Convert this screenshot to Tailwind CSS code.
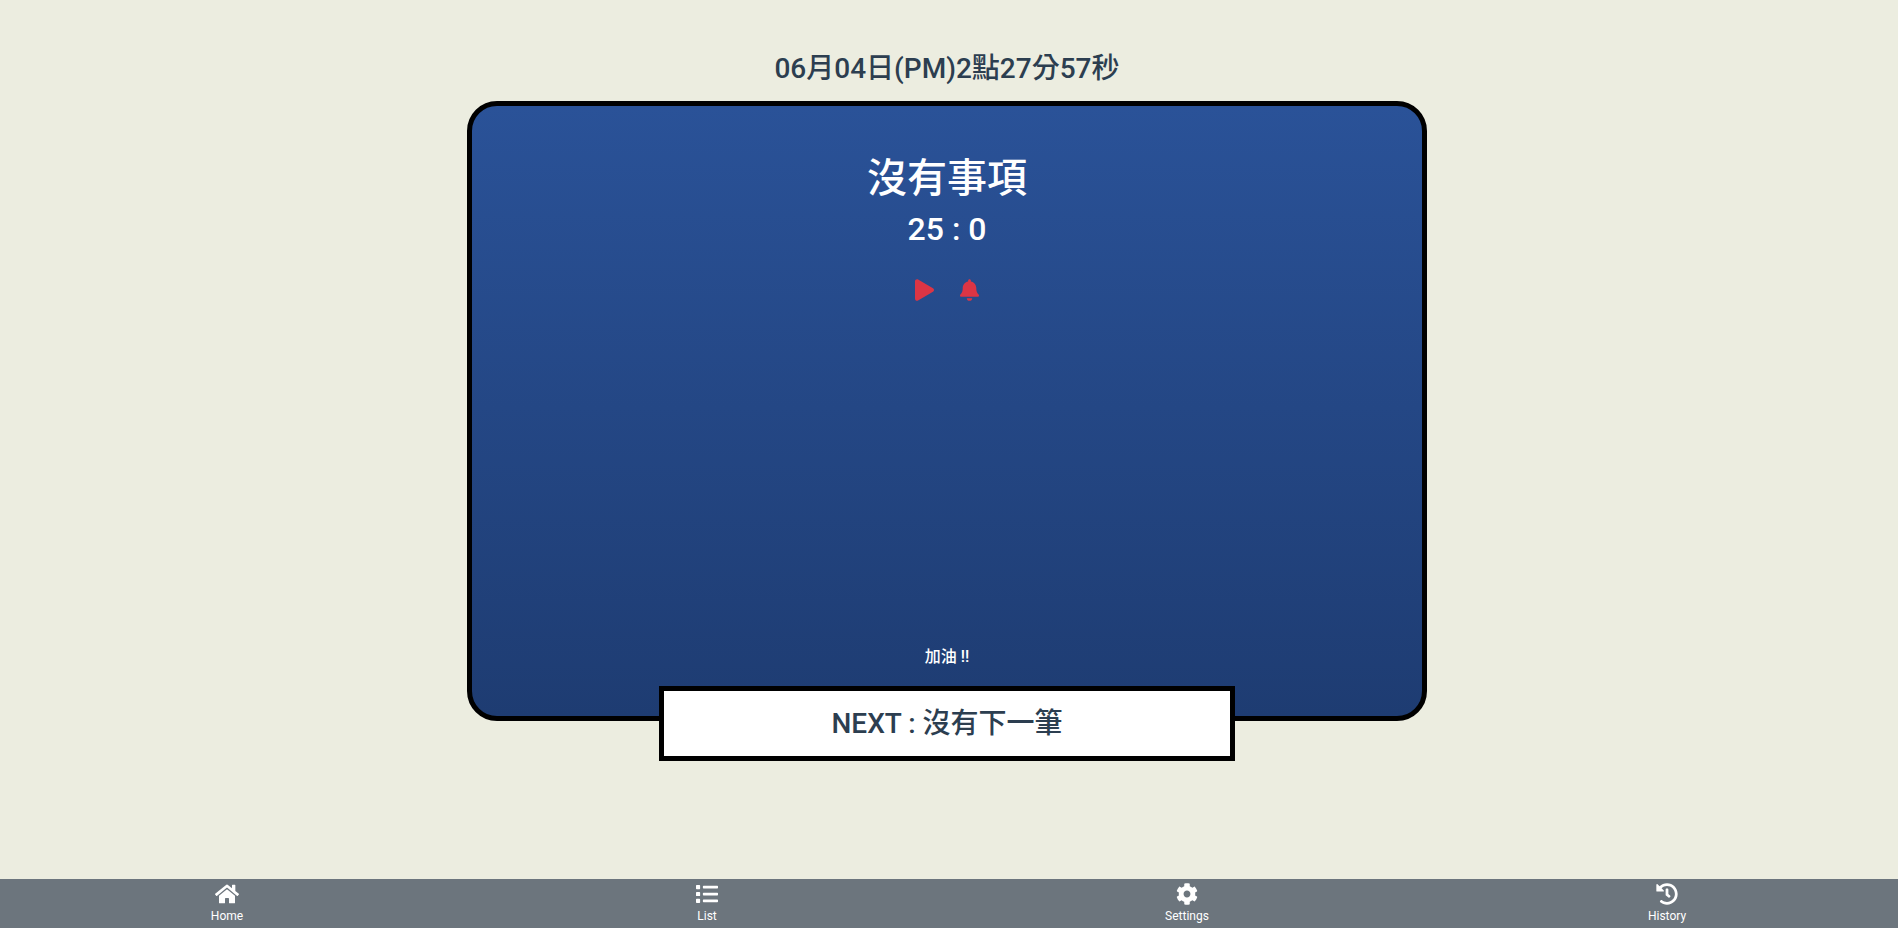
<!DOCTYPE html>
<html lang="zh-Hant">
<head>
<meta charset="utf-8">
<meta name="viewport" content="width=device-width, initial-scale=1">
<title>Pomodoro</title>
<script src="https://cdn.jsdelivr.net/npm/@tailwindcss/browser@4"></script>
</head>
<body class="flex min-h-screen flex-col overflow-x-hidden bg-[#ecede0] font-['Roboto','Noto_Sans_CJK_TC',sans-serif] text-[#2c3e50]">
<main class="flex grow flex-col items-center pt-[49px] pr-1 pb-12">
  <h3 class="mb-3 text-[28px] leading-10 font-medium">06月04日(PM)2點27分57秒</h3>
  <section class="flex min-h-[620px] w-full max-w-[960px] flex-col items-center rounded-[30px] border-5 border-black bg-linear-to-b from-[#2a5298] to-[#1e3c72] pt-[49px] text-white">
    <h1 class="text-[40px] leading-12 font-medium">沒有事項</h1>
    <h2 class="mt-1.5 text-[32px] leading-10 font-medium">25 : 0</h2>
    <div class="mt-[30px] flex gap-[26px] text-[#dc3545]">
      <button type="button" aria-label="Play"><svg class="h-[22px] w-[19px]" viewBox="0 0 448 512" fill="currentColor"><path d="M424.4 214.7L72.4 6.6C43.8-10.3 0 6.1 0 47.9V464c0 37.5 40.7 60.1 72.4 41.3l352-208c31.4-18.5 31.5-64.1 0-82.6z"/></svg></button>
      <button type="button" aria-label="Alarm"><svg class="h-[22px] w-[19px]" viewBox="0 0 448 512" fill="currentColor"><path d="M224 512c35.32 0 63.97-28.65 63.97-64H160.03c0 35.35 28.65 64 63.97 64zm215.39-149.71c-19.32-20.76-55.47-51.99-55.47-154.29 0-77.7-54.48-139.9-127.94-155.16V32c0-17.67-14.32-32-31.98-32s-31.98 14.33-31.98 32v20.84C118.56 68.1 64.08 130.3 64.08 208c0 102.3-36.15 133.53-55.47 154.29-6 6.45-8.66 14.16-8.61 21.71.11 16.4 12.98 32 32.1 32h383.8c19.12 0 32-15.6 32.1-32 .05-7.55-2.61-15.27-8.61-21.71z"/></svg></button>
    </div>
    <p class="mt-auto mb-[47px] text-base leading-6 font-medium">加油 !!</p>
  </section>
  <div class="-mt-[35px] flex h-[75px] w-3/5 max-w-[576px] items-center justify-center border-5 border-black bg-white">
    <h3 class="text-[28px] leading-10 font-medium">NEXT : 沒有下一筆</h3>
  </div>
</main>
<nav class="bg-[#6c757d] text-xs text-white">
  <div class="-mr-[9px] -ml-[13px] grid grid-cols-4">
    <a href="#home" class="flex flex-col items-center gap-[3px] py-1"><svg class="h-[22px] w-6" viewBox="0 0 576 512" fill="currentColor"><path d="M280.37 148.26L96 300.11V464a16 16 0 0 0 16 16l112.06-.29a16 16 0 0 0 15.92-16V368a16 16 0 0 1 16-16h64a16 16 0 0 1 16 16v95.64a16 16 0 0 0 16 16.05L464 480a16 16 0 0 0 16-16V300L295.67 148.26a12.19 12.19 0 0 0-15.3 0zM571.6 251.47L488 182.56V44.05a12 12 0 0 0-12-12h-56a12 12 0 0 0-12 12v72.61L318.47 43a48 48 0 0 0-61 0L4.34 251.47a12 12 0 0 0-1.6 16.9l25.5 31A12 12 0 0 0 45.15 301l235.22-193.74a12.19 12.19 0 0 1 15.3 0L530.9 301a12 12 0 0 0 16.9-1.6l25.5-31a12 12 0 0 0-1.7-16.93z"/></svg>Home</a>
    <a href="#list" class="flex flex-col items-center gap-[3px] py-1"><svg class="size-[22px]" viewBox="0 0 512 512" fill="currentColor"><path d="M80 368H16a16 16 0 0 0-16 16v64a16 16 0 0 0 16 16h64a16 16 0 0 0 16-16v-64a16 16 0 0 0-16-16zm0-320H16A16 16 0 0 0 0 64v64a16 16 0 0 0 16 16h64a16 16 0 0 0 16-16V64a16 16 0 0 0-16-16zm0 160H16a16 16 0 0 0-16 16v64a16 16 0 0 0 16 16h64a16 16 0 0 0 16-16v-64a16 16 0 0 0-16-16zm416 176H176a16 16 0 0 0-16 16v32a16 16 0 0 0 16 16h320a16 16 0 0 0 16-16v-32a16 16 0 0 0-16-16zm0-320H176a16 16 0 0 0-16 16v32a16 16 0 0 0 16 16h320a16 16 0 0 0 16-16V80a16 16 0 0 0-16-16zm0 160H176a16 16 0 0 0-16 16v32a16 16 0 0 0 16 16h320a16 16 0 0 0 16-16v-32a16 16 0 0 0-16-16z"/></svg>List</a>
    <a href="#settings" class="flex flex-col items-center gap-[3px] py-1"><svg class="size-[22px]" viewBox="0 0 512 512" fill="currentColor"><path d="M487.4 315.7l-42.6-24.6c4.3-23.2 4.3-47 0-70.2l42.6-24.6c4.9-2.8 7.1-8.6 5.5-14-11.1-35.6-30-67.8-54.7-94.6-3.8-4.1-10-5.1-14.8-2.3L380.8 110c-17.9-15.4-38.5-27.3-60.8-35.1V25.8c0-5.6-3.9-10.5-9.4-11.7-36.7-8.2-74.3-7.8-109.2 0-5.5 1.2-9.4 6.1-9.4 11.7V75c-22.2 7.9-42.8 19.8-60.8 35.1L88.7 85.5c-4.9-2.8-11-1.9-14.8 2.3-24.7 26.7-43.6 58.9-54.7 94.6-1.7 5.4.6 11.2 5.5 14L67.3 221c-4.3 23.2-4.3 47 0 70.2l-42.6 24.6c-4.9 2.8-7.1 8.6-5.5 14 11.1 35.6 30 67.8 54.7 94.6 3.8 4.1 10 5.1 14.8 2.3l42.6-24.6c17.9 15.4 38.5 27.3 60.8 35.1v49.2c0 5.6 3.9 10.5 9.4 11.7 36.7 8.2 74.3 7.8 109.2 0 5.5-1.2 9.4-6.1 9.4-11.7v-49.2c22.2-7.9 42.8-19.8 60.8-35.1l42.6 24.6c4.9 2.8 11 1.9 14.8-2.3 24.7-26.7 43.6-58.9 54.7-94.6 1.5-5.5-.7-11.3-5.6-14.1zM256 336c-44.1 0-80-35.9-80-80s35.9-80 80-80 80 35.9 80 80-35.9 80-80 80z"/></svg>Settings</a>
    <a href="#history" class="flex flex-col items-center gap-[3px] py-1"><svg class="size-[22px]" viewBox="0 0 512 512" fill="currentColor"><path d="M504 255.531c.253 136.64-111.18 248.372-247.82 248.468-59.015.042-113.223-20.53-155.822-54.911-11.077-8.94-11.905-25.541-1.839-35.607l11.267-11.267c8.609-8.609 22.353-9.551 31.891-1.984C173.062 425.135 212.781 440 256 440c101.705 0 184-82.311 184-184 0-101.705-82.311-184-184-184-48.814 0-93.149 18.969-126.068 49.932l50.754 50.754c10.08 10.08 2.941 27.314-11.313 27.314H24c-8.837 0-16-7.163-16-16V38.627c0-14.254 17.234-21.393 27.314-11.314l49.372 49.372C129.209 34.136 189.552 8 256 8c136.81 0 247.747 110.78 248 247.531zm-180.912 78.784l9.823-12.63c8.138-10.463 6.253-25.542-4.21-33.679L288 256.349V152c0-13.255-10.745-24-24-24h-16c-13.255 0-24 10.745-24 24v135.651l65.409 50.874c10.463 8.137 25.541 6.253 33.679-4.21z"/></svg>History</a>
  </div>
</nav>
</body>
</html>
